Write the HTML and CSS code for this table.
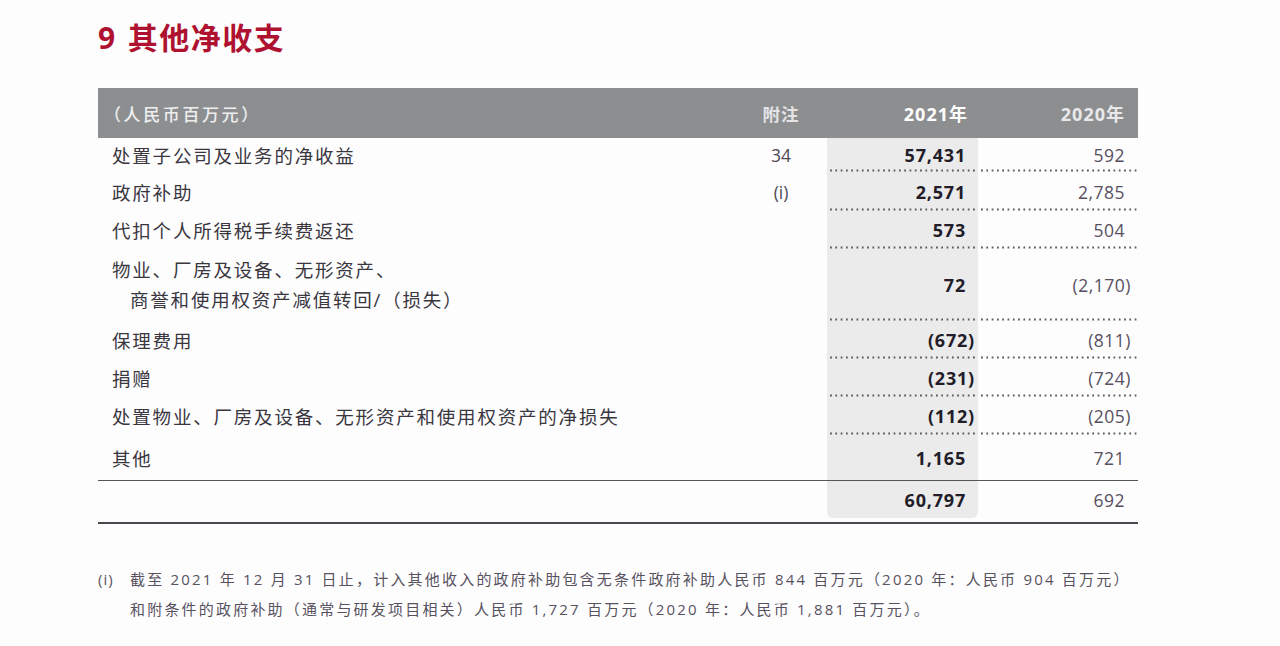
FILE: index.html
```html
<!DOCTYPE html>
<html lang="zh-CN">
<head>
<meta charset="utf-8">
<title>其他净收支</title>
<link rel="stylesheet" href="styles.css">
</head>
<body>
<div class="page">
  <h1 class="title"><span class="title-num">9</span>其他净收支</h1>

  <div class="table">
    <div class="row head">
      <div class="cell label">（人民币百万元）</div>
      <div class="cell note">附注</div>
      <div class="cell cur">2021年</div>
      <div class="cell prev">2020年</div>
    </div>

    <div class="row dotted h34">
      <div class="cell label">处置子公司及业务的净收益</div>
      <div class="cell note">34</div>
      <div class="cell cur">57,431</div>
      <div class="cell prev">592</div>
    </div>

    <div class="row dotted h39">
      <div class="cell label">政府补助</div>
      <div class="cell note">(i)</div>
      <div class="cell cur">2,571</div>
      <div class="cell prev">2,785</div>
    </div>

    <div class="row dotted">
      <div class="cell label">代扣个人所得税手续费返还</div>
      <div class="cell note"></div>
      <div class="cell cur">573</div>
      <div class="cell prev">504</div>
    </div>

    <div class="row dotted h72">
      <div class="cell label multi">物业、厂房及设备、无形资产、<br>商誉和使用权资产减值转回/（损失）</div>
      <div class="cell note"></div>
      <div class="cell cur">72</div>
      <div class="cell prev neg">(2,170)</div>
    </div>

    <div class="row dotted">
      <div class="cell label">保理费用</div>
      <div class="cell note"></div>
      <div class="cell cur neg">(672)</div>
      <div class="cell prev neg">(811)</div>
    </div>

    <div class="row dotted">
      <div class="cell label">捐赠</div>
      <div class="cell note"></div>
      <div class="cell cur neg">(231)</div>
      <div class="cell prev neg">(724)</div>
    </div>

    <div class="row dotted">
      <div class="cell label">处置物业、厂房及设备、无形资产和使用权资产的净损失</div>
      <div class="cell note"></div>
      <div class="cell cur neg">(112)</div>
      <div class="cell prev neg">(205)</div>
    </div>

    <div class="row ruled h46">
      <div class="cell label">其他</div>
      <div class="cell note"></div>
      <div class="cell cur">1,165</div>
      <div class="cell prev">721</div>
    </div>

    <div class="row total">
      <div class="cell label"></div>
      <div class="cell note"></div>
      <div class="cell cur">60,797</div>
      <div class="cell prev">692</div>
    </div>
  </div>

  <div class="footnote">
    <div class="fn-mark">(i)</div>
    <div class="fn-text">截至 2021 年 12 月 31 日止，计入其他收入的政府补助包含无条件政府补助人民币 844 百万元（2020 年：人民币 904 百万元）<br>和附条件的政府补助（通常与研发项目相关）人民币 1,727 百万元（2020 年：人民币 1,881 百万元）。</div>
  </div>
</div>
</body>
</html>
```

FILE: styles.css
```css
* {
  box-sizing: border-box;
}

html, body {
  margin: 0;
  padding: 0;
  background: #fdfdfe;
}

body {
  font-family: "Open Sans", "Noto Sans CJK SC", sans-serif;
  color: #36323a;
}

.page {
  width: 1280px;
  padding: 20px 0 0 98px;
}

.title {
  margin: 0;
  height: 36px;
  line-height: 36px;
  font-size: 30px;
  font-weight: 700;
  color: #af1230;
  letter-spacing: 1.5px;
}

.title-num {
  margin-right: 11px;
}

.table {
  width: 1040px;
  margin-top: 32px;
}

.row {
  display: grid;
  grid-template-columns: 1fr 92px 151px 160px;
  height: 38px;
}

.row.h34 { height: 34px; }
.row.h39 { height: 39px; }
.row.h46 { height: 46px; }
.row.h72 { height: 72px; }

.cell {
  display: flex;
  align-items: center;
  white-space: nowrap;
}

.label {
  padding-left: 14px;
  font-size: 18.5px;
  letter-spacing: 1.8px;
  color: #3a363e;
}

.label.multi {
  display: block;
  align-self: center;
  line-height: 30px;
  padding-left: 32px;
  text-indent: -18px;
  white-space: normal;
}

.note {
  justify-content: center;
  font-size: 17.5px;
  color: #4f4a55;
}

.cur {
  justify-content: flex-end;
  padding-right: 12px;
  background-color: #ebebec;
  font-size: 18px;
  font-weight: 700;
  letter-spacing: 0.8px;
  color: #221d28;
}

.cur.neg {
  padding-right: 3px;
}

.prev {
  justify-content: flex-end;
  padding-right: 13px;
  font-size: 17.5px;
  letter-spacing: 0.5px;
  color: #57505e;
}

.prev.neg {
  padding-right: 7px;
}

/* header bar */
.row.head {
  height: 50px;
  background: #8d8e90;
}

.head .label {
  padding-left: 6px;
  font-size: 17px;
  letter-spacing: 2.6px;
  color: #eeeeef;
  font-weight: 500;
}

.head .note {
  font-size: 17.5px;
  letter-spacing: 1px;
  color: #e4e4e6;
  font-weight: 700;
}

.head .cur {
  background: transparent;
  padding-right: 10px;
  font-size: 18px;
  letter-spacing: 1px;
  color: #ffffff;
}

.head .prev {
  padding-right: 13px;
  font-size: 18px;
  font-weight: 700;
  letter-spacing: 1px;
  color: #e9e9eb;
}

/* dotted separators under value columns */
.row.dotted .cur,
.row.dotted .prev {
  background-image: radial-gradient(circle, #5f5a64 0.9px, transparent 1.3px);
  background-size: 5.3px 3px;
  background-repeat: repeat-x;
  background-position: -4px 100%;
}

.row.ruled {
  border-bottom: 1px solid #57535a;
}

.row.total {
  height: 43px;
  padding-bottom: 4px;
  border-bottom: 2px solid #4a464e;
}

.row.total .cur {
  border-radius: 0 0 6px 6px;
}

/* footnote */
.footnote {
  display: grid;
  grid-template-columns: 32px 1fr;
  margin-top: 40px;
  width: 1080px;
  font-size: 15px;
  line-height: 30px;
  color: #58525e;
}

.fn-mark {
  letter-spacing: 1px;
}

.fn-text {
  white-space: nowrap;
  letter-spacing: 2.2px;
}
```
